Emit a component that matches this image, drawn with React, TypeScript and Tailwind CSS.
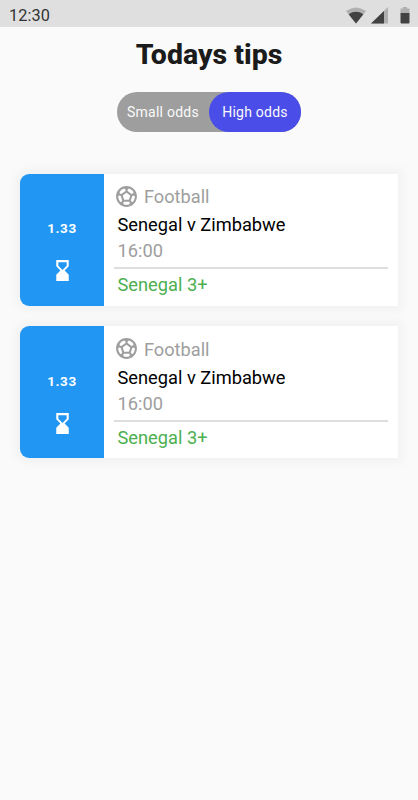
import { MdHourglassBottom, MdSportsSoccer } from 'react-icons/md';

const tips = [
  { id: 1, odds: '1.33', sport: 'Football', match: 'Senegal v Zimbabwe', time: '16:00', tip: 'Senegal 3+' },
  { id: 2, odds: '1.33', sport: 'Football', match: 'Senegal v Zimbabwe', time: '16:00', tip: 'Senegal 3+' },
];

const StatusBar = () => {
  return (
    <div className="flex items-center h-[27px] bg-[#dfdfdf] pl-[9px] pr-2 pt-1">
      <span className="text-[16.300px] leading-6 tracking-[0.1px] text-[#333333]">12:30</span>
      <svg className="ml-auto" width="20" height="17" viewBox="0 0 20 17">
        <path d="M0 4Q10-3 20 4L10 16.500z" fill="#b0b0b0" />
        <path d="M2.6 7.2Q10 2.500 17.4 7.2L10 16.500z" fill="#424242" />
      </svg>
      <svg className="ml-[5px]" width="17" height="17" viewBox="0 0 17 17">
        <path d="M17 0v16.500H0z" fill="#b0b0b0" />
        <path d="M13 4v12.500H0z" fill="#424242" />
      </svg>
      <svg className="ml-3" width="10" height="17" viewBox="0 0 10 17">
        <path d="M3 0h4v1.500h2.500v5h-9v-5H3z" fill="#b0b0b0" />
        <path d="M.5 6h9v9.500q0 1-1 1h-7q-1 0-1-1z" fill="#424242" />
      </svg>
    </div>
  );
};

const TipCard = ({ tip }: { tip: (typeof tips)[number] }) => {
  return (
    <div className="flex h-[132px] rounded-l-[9px] bg-white shadow-[0_0_10px_5px_rgba(0,0,0,0.035)]">
      <div className="flex flex-col items-center w-[84px] rounded-l-[9px] bg-[#2196f3] text-white pt-[44.200px]">
        <span className="text-[13.500px] leading-5 font-bold tracking-[0.600px]">{tip.odds}</span>
        <MdHourglassBottom className="mt-5 size-[25px]" />
      </div>
      <div className="flex-1 pl-[10px] pr-[10px] pt-[9.200px]">
        <div className="flex items-center h-[26px] text-[#9e9e9e]">
          <MdSportsSoccer className="size-[25px]" />
          <span className="ml-[5px] pt-[2px] text-[18.200px] leading-6">{tip.sport}</span>
        </div>
        <p className="pl-[3.500px] h-[29px] text-[18.250px] leading-8 text-black">{tip.match}</p>
        <p className="pl-[3.500px] h-[29px] text-[18.250px] leading-[26px] text-[#9e9e9e]">{tip.time}</p>
        <div className="h-[2px] bg-[#dedede]" />
        <p className="pl-[3.500px] text-[18.250px] leading-8 text-[#4caf50]">{tip.tip}</p>
      </div>
    </div>
  );
};

const App = () => {
  return (
    <div className="min-h-screen bg-[#fafafa] font-['Roboto',sans-serif]">
      <StatusBar />
      <h1 className="mt-[10px] text-center text-[28.500px] leading-9 font-extrabold text-[#1b1b1b]">Todays tips</h1>
      <div className="flex w-[184px] h-10 mx-auto mt-[19px] rounded-full bg-[#9e9e9e] text-[14px] leading-10 text-[#fafafa]">
        <button className="w-[92px] tracking-[0.25px]">Small odds</button>
        <button className="w-[92px] rounded-full bg-[#4a4de7] tracking-[0.25px]">High odds</button>
      </div>
      <div className="flex flex-col gap-[20.400px] px-5 pt-[42px]">
        {tips.map((tip) => (
          <TipCard key={tip.id} tip={tip} />
        ))}
      </div>
    </div>
  );
};

export default App;
